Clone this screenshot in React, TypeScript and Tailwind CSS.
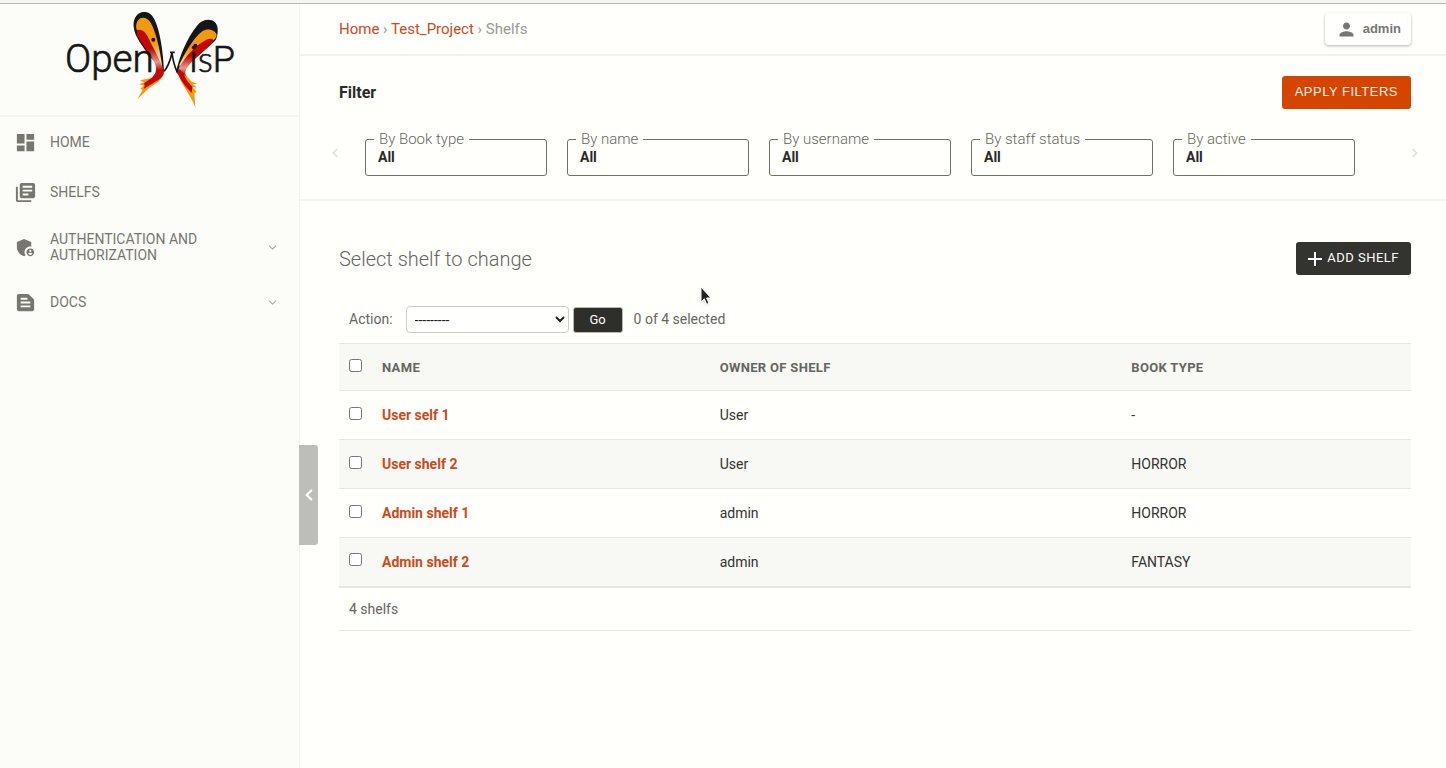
import type { ReactNode } from "react";
import {
  MdAdminPanelSettings,
  MdDashboard,
  MdLibraryBooks,
  MdPerson,
  MdTextSnippet,
} from "react-icons/md";
import { ChevronDown, ChevronLeft, ChevronRight } from "lucide-react";

function Logo() {
  return (
    <svg viewBox="0 0 570 333" className="h-[111px] w-[190px]" role="img" aria-label="OpenWISP">
      <defs>
        <linearGradient id="wing" x1="0" y1="0" x2="0" y2="1">
          <stop offset="0.5" stopColor="#f29a0c" />
          <stop offset="0.85" stopColor="#fbe0b4" />
        </linearGradient>
        <linearGradient id="redWing" x1="0" y1="0" x2="0" y2="1">
          <stop offset="0.4" stopColor="#c40606" />
          <stop offset="0.68" stopColor="#e89a8a" />
          <stop offset="0.85" stopColor="#c40606" />
        </linearGradient>
      </defs>
      <path d="M327 204C325 145 315 78 298 46C288 25 272 22 260 25C244 29 234 47 236 68C239 98 262 126 287 160Z" fill="#161616" />
      <path d="M322 190C316 140 302 80 287 56C277 40 259 36 250 48C242 58 242 72 247 82C264 86 290 130 322 190Z" fill="url(#wing)" />
      <path d="M246 78C260 74 270 82 277 96C292 126 310 158 327 200L320 218L296 220C304 202 306 192 298 174C284 148 258 118 246 92Z" fill="url(#redWing)" />
      <circle cx="295" cy="107" r="6" fill="#161616" />
      <path d="M327 202C318 204 306 212 292 221L270 226L255 229L267 235L253 241L266 245L255 255L263 257L247 286L283 251L312 232L324 216Z" fill="#f29a0c" />
      <path d="M327 196C314 196 302 206 292 220C284 228 268 235 267 240C272 244 266 251 268 254C286 240 318 230 326 210Z" fill="#c40606" />

      <path d="M364 204C370 164 396 102 426 65C442 45 469 42 482 57C491 69 490 91 482 108C462 128 424 160 398 184Z" fill="#161616" />
      <path d="M367 197C382 160 414 102 442 82C460 69 482 80 485 92C484 110 460 118 440 128C414 142 382 178 367 197Z" fill="url(#wing)" />
      <path d="M365 204C382 170 410 136 437 118C452 108 466 100 475 107C473 122 452 134 438 148C412 171 393 190 391 204C390 215 398 226 408 234L383 230Z" fill="url(#redWing)" />
      <circle cx="421" cy="125" r="6" fill="#161616" />
      <path d="M368 206C378 242 405 268 421 309L418 269L425 263L412 250L426 250L413 241L427 240L410 233L394 215Z" fill="#f29a0c" />
      <path d="M365 203C373 218 382 238 410 267L412 248C402 238 390 224 386 208L374 196Z" fill="#c40606" />

      <g fill="#161616" stroke="#161616" strokeWidth="2" fontFamily="Roboto, sans-serif" fontWeight="300">
        <text x="30" y="205" fontSize="116">Open</text>
        <text x="403" y="205" fontSize="112">i</text>
        <text x="429" y="205" fontSize="104" fontFamily="Lato, sans-serif">s</text>
        <text x="473" y="205" fontSize="108">P</text>
      </g>
      <path d="M327 202C338 190 346 168 351 147M345 145H359M351 147C354 170 360 190 366 203C368 196 370 190 372 184" fill="none" stroke="#161616" strokeWidth="5" />
    </svg>
  );
}

function NavItem({ icon, label, expandable }: { icon: ReactNode; label: string; expandable?: boolean }) {
  return (
    <li>
      <a href="#" className="flex min-h-[50px] items-center gap-3 py-[14px] pr-5 pl-[14px] text-sm leading-4 text-[#777770] uppercase">
        <span className="flex h-5 w-6 shrink-0 items-center justify-start">{icon}</span>
        <span className="w-[170px]">{label}</span>
        {expandable && <ChevronDown size={13} className="ml-auto text-[#aaaaa4]" />}
      </a>
    </li>
  );
}

const filters = ["By Book type", "By name", "By username", "By staff status", "By active"];

const shelves = [
  { name: "User self 1", owner: "User", type: "-" },
  { name: "User shelf 2", owner: "User", type: "HORROR" },
  { name: "Admin shelf 1", owner: "admin", type: "HORROR" },
  { name: "Admin shelf 2", owner: "admin", type: "FANTASY" },
];

const box = "block size-[13px]";

export default function App() {
  return (
    <div className="relative flex min-h-screen flex-col bg-[#fffffc] font-['Roboto',sans-serif] text-sm text-[#666661]">
      <div className="h-1 border-b border-[#b8b8b5] bg-[#f5f5f2]" />
      <div className="flex flex-1">
        <aside className="relative w-[300px] shrink-0 border-r border-[#f2f3ef] bg-[#fcfdf9]">
          <div className="flex h-[113px] justify-center border-b-2 border-[#f4f5f1]">
            <Logo />
          </div>
          <nav>
            <ul>
              <NavItem icon={<MdDashboard size={23} />} label="Home" />
              <NavItem icon={<MdLibraryBooks size={23} />} label="Shelfs" />
              <NavItem icon={<MdAdminPanelSettings size={23} />} label="Authentication and Authorization" expandable />
              <NavItem icon={<MdTextSnippet size={23} />} label="Docs" expandable />
            </ul>
          </nav>
          <button aria-label="Collapse menu" className="absolute top-[441px] -right-[19px] flex h-[100px] w-[19px] items-center justify-center rounded-r-[3px] bg-[#bdbeb9] text-white">
            <ChevronLeft size={18} strokeWidth={3} />
          </button>
        </aside>

        <main className="min-w-0 flex-1">
          <header className="flex h-[52px] items-center justify-between border-b-2 border-[#f2f3f0] pr-[35px] pl-[39px]">
            <nav aria-label="Breadcrumb" className="pt-px text-[15px] text-[#999993]">
              <a href="#" className="text-[#cc4a1c]">Home</a> › <a href="#" className="text-[#cc4a1c]">Test_Project</a> › Shelfs
            </nav>
            <button className="flex h-8 items-center gap-1.5 rounded-sm bg-[#fffffd] pr-2.5 pl-[11px] font-['Liberation_Sans',sans-serif] text-[13px] font-bold text-[#777772] shadow-[0_1px_3px_rgba(0,0,0,0.3)]">
              <MdPerson size={21} />
              admin
            </button>
          </header>

          <section className="border-b-2 border-[#f2f3f0] pt-5 pb-[23px]">
            <div className="flex items-center justify-between pr-[35px] pl-[39px]">
              <h2 className="text-base font-bold text-[#2a2a27]">Filter</h2>
              <button className="h-[33px] rounded-[3px] bg-[#d64500] px-[13px] font-['Liberation_Sans',sans-serif] text-[13px] tracking-[0.5px] text-[#fff4ec]">
                APPLY FILTERS
              </button>
            </div>
            <div className="mt-[21px] flex items-center justify-between pr-6 pl-7">
              <button aria-label="Previous filters" className="text-[#dededa]">
                <ChevronLeft size={14} strokeWidth={3} />
              </button>
              <div className="ml-[23px] flex flex-1 gap-5">
                {filters.map((label) => (
                  <fieldset key={label} className="h-[46px] w-[182px] rounded-[3px] border border-[#70706a] pl-2">
                    <legend className="px-[5px] text-[15px] leading-[18px] font-light">{label}</legend>
                    <button aria-label={label + ": All"} className="block w-full pl-1 text-left text-sm leading-[18px] font-bold text-[#2a2a27]">
                      All
                    </button>
                  </fieldset>
                ))}
              </div>
              <button aria-label="Next filters" className="text-[#dededa]">
                <ChevronRight size={14} strokeWidth={3} />
              </button>
            </div>
          </section>

          <section className="pt-[41px] pr-[35px] pl-[39px]">
            <div className="flex items-center justify-between">
              <h1 className="text-xl font-light">Select shelf to change</h1>
              <a href="#" className="flex h-[33px] items-center gap-[5px] rounded-[3px] bg-[#333330] px-3 text-[13px] tracking-[0.5px] text-white">
                <svg viewBox="0 0 14 14" className="size-3.5" aria-hidden="true">
                  <path d="M7 0v14M0 7h14" stroke="currentColor" strokeWidth="2" />
                </svg>
                ADD SHELF
              </a>
            </div>

            <div className="mt-[31px] flex items-center pl-2.5">
              <label htmlFor="action" className="mr-[13px] pb-0.5">Action:</label>
              <select id="action" className="h-[27px] w-[163px] rounded-sm border border-[#ccccc8] bg-[#fffffd] pl-1 text-sm text-[#222220]">
                <option>---------</option>
              </select>
              <button className="ml-1 h-[26px] w-[50px] rounded-[3px] border border-[#b8b8b4] bg-[#2e2e2b] pt-px text-[13px] text-white">Go</button>
              <span className="ml-[11px] pb-0.5">0 of 4 selected</span>
            </div>

            <table className="mt-2.5 w-full table-fixed border-collapse text-left">
              <thead>
                <tr className="h-[47px] border-y border-[#e6e7e3] bg-[#f8f9f5] text-[13px] tracking-wide">
                  <th className="w-[33px] pb-1 pl-2.5">
                    <input type="checkbox" aria-label="Select all shelfs" className={box} />
                  </th>
                  <th className="w-[31.5%] pt-0.5 pl-2.5 font-bold">NAME</th>
                  <th className="w-[38.4%] pt-0.5 pl-2.5 font-bold">OWNER OF SHELF</th>
                  <th className="pt-0.5 pl-2.5 font-bold">BOOK TYPE</th>
                </tr>
              </thead>
              <tbody className="text-[#333330]">
                {shelves.map((shelf) => (
                  <tr key={shelf.name} className="h-[49px] border-b border-[#e6e7e3] even:bg-[#f8f9f5] last:border-b-2">
                    <td className="pb-1 pl-2.5">
                      <input type="checkbox" aria-label={"Select " + shelf.name} className={box} />
                    </td>
                    <th scope="row" className="pl-2.5 font-bold">
                      <a href="#" className="text-[#cc4a1c]">{shelf.name}</a>
                    </th>
                    <td className="pl-2.5">{shelf.owner}</td>
                    <td className="pl-2.5">{shelf.type}</td>
                  </tr>
                ))}
              </tbody>
            </table>
            <p className="border-b border-[#e6e7e3] py-[11px] pl-2.5">4 shelfs</p>
          </section>
        </main>
      </div>

      <svg viewBox="0 0 12 20" className="pointer-events-none absolute top-[286px] left-[700px] h-5 w-3 drop-shadow" aria-hidden="true">
        <path d="M1 1v15l3.300-3.200 2.400 5.500 2.300-1-2.400-5.300H11Z" fill="#222" stroke="#fff" strokeWidth="1" />
      </svg>
    </div>
  );
}
